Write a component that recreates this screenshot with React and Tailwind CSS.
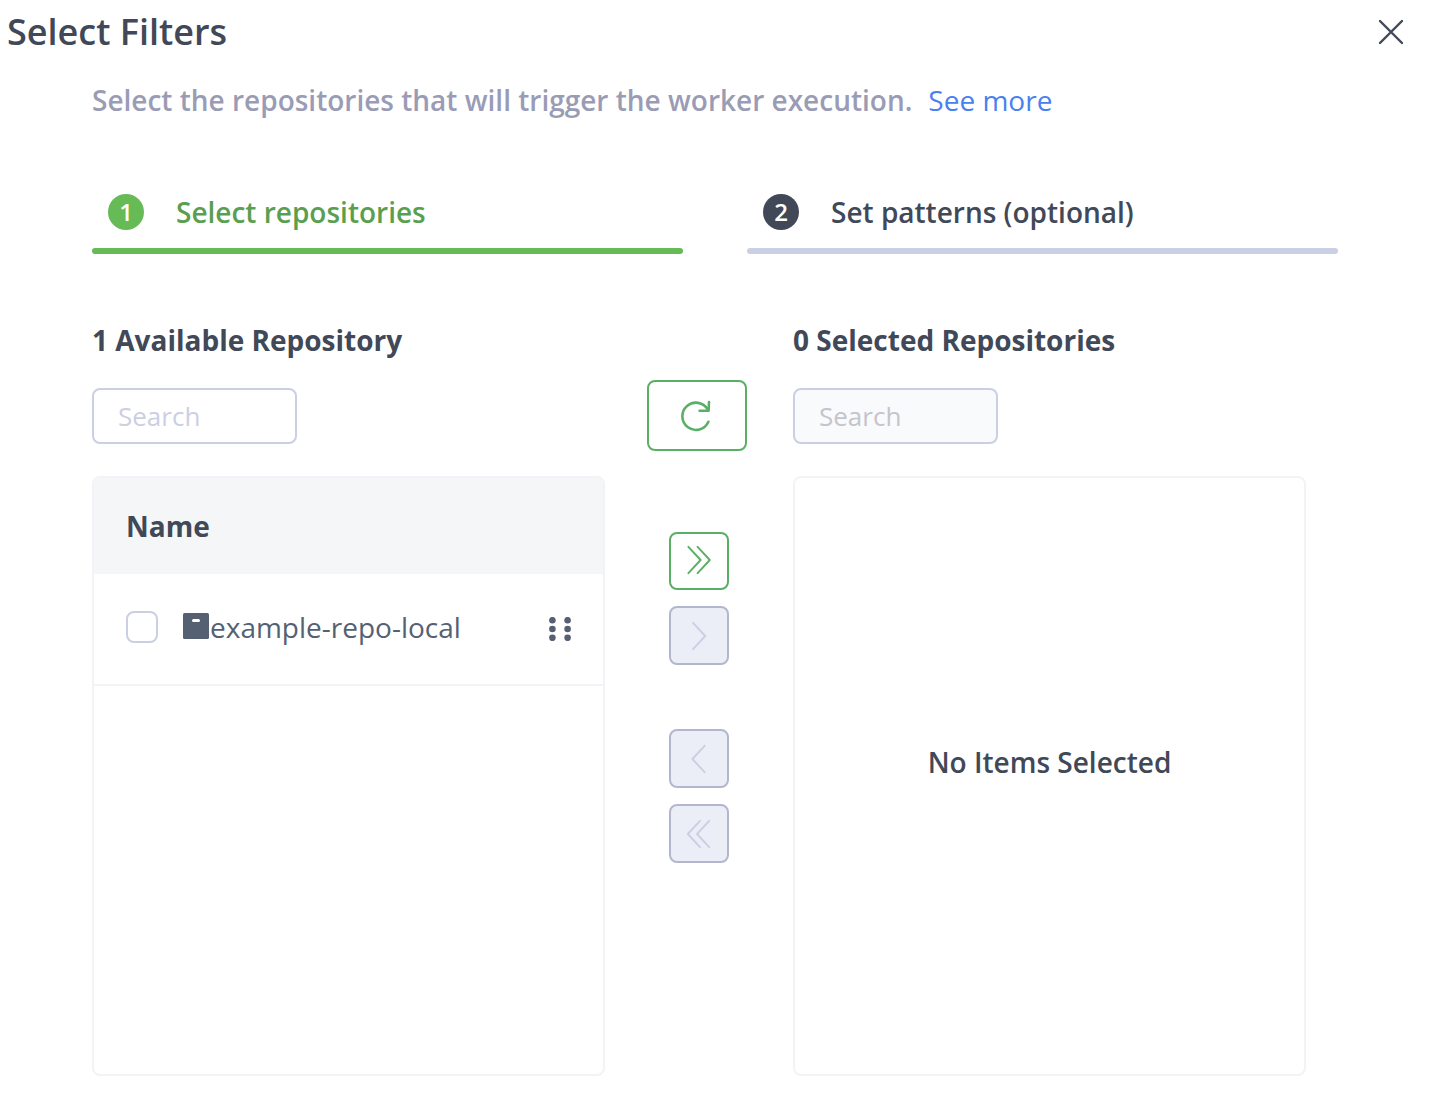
import React from "react";

const steps = [
  { number: 1, label: "Select repositories", active: true },
  { number: 2, label: "Set patterns (optional)", active: false },
];

function CloseIcon() {
  return (
    <svg width="26" height="26" viewBox="0 0 26 26" fill="none" stroke="currentColor" strokeWidth="2.4" strokeLinecap="round" aria-hidden="true">
      <path d="M2 2 24 24M24 2 2 24" />
    </svg>
  );
}

function RefreshIcon() {
  return (
    <svg width="32" height="34" viewBox="0 0 32 34" fill="none" stroke="currentColor" strokeWidth="2.6" strokeLinecap="round" strokeLinejoin="round" aria-hidden="true">
      <path d="M27.4 22.8A13.6 13.6 0 1 1 26.8 10.6" />
      <path d="M28 3 27.6 11.8H18.6" />
    </svg>
  );
}

const arrowPaths = {
  allRight: "M9.4 5.8 21.6 19 9.4 32.2M18.6 5.8 30.8 19 18.6 32.2",
  right: "M14 6.8 26.2 20 14 33.2",
  left: "M25.6 6.8 13.4 20 25.6 33.2",
  allLeft: "M21 6.8 8.8 20 21 33.2M30.2 6.8 18 20 30.2 33.2",
};

function MoveButton({ label, icon, disabled, className = "" }) {
  return (
    <button
      type="button"
      aria-label={label}
      disabled={disabled}
      className={`flex w-15 items-center justify-center rounded-lg border-2 border-[#5aaf66] bg-white text-[#5aaf66] disabled:border-[#b3b7cd] disabled:bg-[#ebeef6] disabled:text-[#cbcfe3] ${className}`}
    >
      <svg width="40" height="40" viewBox="0 0 40 40" fill="none" stroke="currentColor" strokeWidth="1.9" strokeLinecap="round" strokeLinejoin="round" aria-hidden="true">
        <path d={arrowPaths[icon]} />
      </svg>
    </button>
  );
}

function RepoIcon() {
  return (
    <svg className="shrink-0" width="26" height="26" viewBox="0 0 26 26" aria-hidden="true">
      <rect width="26" height="26" rx="1.6" fill="#556172" />
      <rect x="9" y="6" width="8" height="3" rx="1.5" fill="#fff" />
    </svg>
  );
}

function GripIcon() {
  return (
    <svg width="22" height="24" viewBox="0 0 22 24" fill="#556172" aria-hidden="true">
      {[3.2, 12, 20.8].map((y) => (
        <React.Fragment key={y}>
          <circle cx="3.4" cy={y} r="3.3" />
          <circle cx="18.6" cy={y} r="3.3" />
        </React.Fragment>
      ))}
    </svg>
  );
}

export default function App() {
  return (
    <main className="bg-white pb-5 font-['Open_Sans',sans-serif] text-[28px] leading-10 text-[#414857]">
      <header className="flex h-16 items-center justify-between pr-[25px] pl-[7px]">
        <h1 className="text-4xl font-semibold">Select Filters</h1>
        <button type="button" aria-label="Close">
          <CloseIcon />
        </button>
      </header>

      <div className="pt-4 pr-[91px] pl-[92px]">
        <p className="font-semibold text-[#9a9cb5]">
          Select the repositories that will trigger the worker execution.
          <a href="#more" className="ml-4 font-normal text-[#4a80f0]">See more</a>
        </p>

        <ol className="mt-[72px] grid grid-cols-2 gap-16">
          {steps.map((step) => (
            <li
              key={step.number}
              aria-current={step.active ? "step" : undefined}
            >
              <div className="flex h-10 items-center gap-8 px-4 font-semibold">
                <span className={`flex size-9 items-center justify-center rounded-full text-2xl text-white ${step.active ? "bg-[#66bb57]" : "bg-[#414857]"}`}>
                  {step.number}
                </span>
                <span className={step.active ? "text-[#5a9f50]" : ""}>{step.label}</span>
              </div>
              <div className={`mt-4 h-1.5 rounded-full ${step.active ? "bg-[#66bb57]" : "bg-[#cbcfe3]"}`} />
            </li>
          ))}
        </ol>

        <div className="mt-[66px] grid grid-cols-[1fr_188px_1fr] pr-8">
          <section>
            <h2 className="font-bold">1 Available Repository</h2>
            <input
              type="text"
              aria-label="Search available repositories"
              placeholder="Search"
              className="mt-7 block h-14 w-[205px] rounded-lg border-2 border-[#cbcfe3] bg-white px-6 text-[26px] placeholder:text-[#cbcfe3]"
            />
            <div className="mt-8 h-[600px] overflow-hidden rounded-lg border-2 border-[#f2f2f7]">
              <table className="w-full text-left">
                <thead>
                  <tr className="h-24 bg-[#f4f6f8]">
                    <th className="px-8 font-bold" colSpan={3}>Name</th>
                  </tr>
                </thead>
                <tbody>
                  <tr className="h-[111px] border-b-2 border-[#f2f2f7] text-[#556172]">
                    <td className="w-16 pl-8">
                      <input
                        id="example-repo-local"
                        type="checkbox"
                        className="mb-1 block size-8 appearance-none rounded-lg border-2 border-[#cbcfe3] bg-white checked:bg-[#66bb57]"
                      />
                    </td>
                    <td className="pb-1 pl-[25px]">
                      <label htmlFor="example-repo-local" className="flex items-start">
                        <span className="pt-1.5">
                          <RepoIcon />
                        </span>
                        <span className="pl-px">example-repo-local</span>
                      </label>
                    </td>
                    <td className="pr-8">
                      <button type="button" aria-label="Drag example-repo-local" className="ml-auto block">
                        <GripIcon />
                      </button>
                    </td>
                  </tr>
                </tbody>
              </table>
            </div>
          </section>

          <div className="flex flex-col items-center pt-15">
            <div className="pr-1">
              <button
                type="button"
                aria-label="Refresh repositories"
                className="flex h-[71px] w-25 items-center justify-center rounded-lg border-2 border-[#5aaf66] text-[#5aaf66]"
              >
                <RefreshIcon />
              </button>
            </div>
            <MoveButton label="Select all" icon="allRight" className="mt-[81px] h-[58px]" />
            <MoveButton label="Select" icon="right" disabled className="mt-4 h-[59px]" />
            <MoveButton label="Remove" icon="left" disabled className="mt-16 h-[59px]" />
            <MoveButton label="Remove all" icon="allLeft" disabled className="mt-4 h-[59px]" />
          </div>

          <section>
            <h2 className="font-bold">0 Selected Repositories</h2>
            <input
              type="text"
              disabled
              aria-label="Search selected repositories"
              placeholder="Search"
              className="mt-7 block h-14 w-[205px] rounded-lg border-2 border-[#cbcfe3] bg-[#f9fafc] px-6 text-[26px] placeholder:text-[#c4c5cb]"
            />
            <div className="mt-8 flex h-[600px] items-center justify-center rounded-lg border-2 border-[#f2f2f7] pb-7 font-semibold">
              No Items Selected
            </div>
          </section>
        </div>
      </div>
    </main>
  );
}
